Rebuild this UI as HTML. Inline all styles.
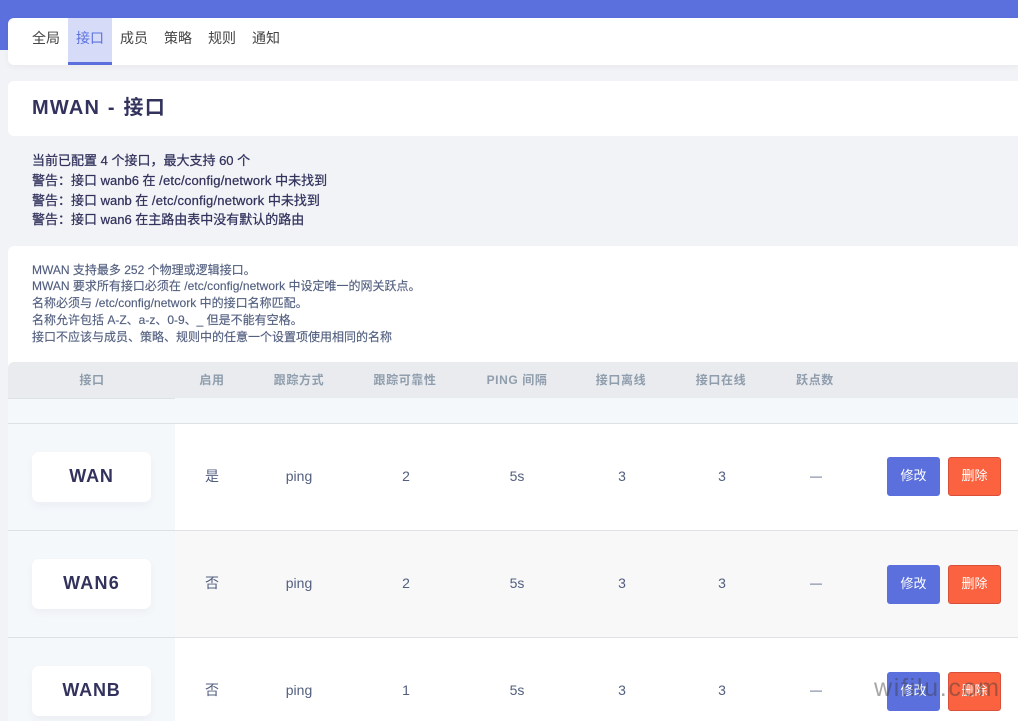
<!DOCTYPE html>
<html lang="zh"><head><meta charset="utf-8"><title>MWAN</title>
<style>
*{box-sizing:border-box}
html,body{margin:0;padding:0;width:1018px;height:721px;overflow:hidden}
body{position:relative;background:#f2f3f6;font-family:"Liberation Sans","Noto Sans CJK SC",sans-serif;color:#32325d}
.a{position:absolute;white-space:nowrap}
.c{position:absolute;white-space:nowrap;text-align:center;transform:translateX(-50%)}
.nav{font-size:14px;color:#444;top:29px;line-height:19px}
.l{left:32px;font-size:13px;line-height:20px;font-weight:400;color:#32325d;-webkit-text-stroke:.25px #32325d}
.l span{letter-spacing:.21px}
.d{left:32px;font-size:12px;line-height:17px;color:#525f7f;-webkit-text-stroke:.15px #525f7f}
.d span{letter-spacing:.05px}
.th{top:372px;font-size:12px;line-height:16px;font-weight:700;color:#8f9dac;letter-spacing:.6px}
.td{font-size:14px;line-height:20px;color:#525f7f}
.card{position:absolute;left:32px;width:119px;height:50px;background:#fff;border-radius:7px;box-shadow:0 4px 8px rgba(50,50,93,.05);text-align:center;font-size:18px;font-weight:700;line-height:48px;color:#32325d;letter-spacing:.8px}
.btn{position:absolute;width:53px;height:39px;border-radius:3px;color:#fff;font-size:13px;line-height:36px;text-align:center}
.b1{left:887px;background:#5b70dd;border:1px solid #5b70dd}
.b2{left:948px;background:#fb6340;border:1px solid #d9503a}
</style></head><body>
<div class="a" style="left:0;top:0;width:1018px;height:50px;background:#5b70dd"></div>
<div class="a" style="left:8px;top:18px;width:1010px;height:47px;background:#fff;border-radius:6px 0 0 6px;box-shadow:0 2px 6px rgba(50,50,93,.05)"></div>
<div class="a" style="left:68px;top:18px;width:44px;height:47px;background:#d6dcf8;border-bottom:3px solid #5b70dd"></div>
<div class="a nav" style="left:32px">全局</div>
<div class="a nav" style="left:76px;color:#5b70dd">接口</div>
<div class="a nav" style="left:120px">成员</div>
<div class="a nav" style="left:164px">策略</div>
<div class="a nav" style="left:208px">规则</div>
<div class="a nav" style="left:252px">通知</div>

<div class="a" style="left:8px;top:81px;width:1010px;height:55px;background:#fff;border-radius:6px 0 0 6px"></div>
<div class="a" style="left:32px;top:95px;font-size:20px;line-height:26px;font-weight:700;letter-spacing:1.2px;word-spacing:1px;color:#32325d">MWAN - 接口</div>

<div class="a l" style="top:151px">当前已配置 4 个接口，最大支持 60 个</div>
<div class="a l" style="top:171px">警告：接口 wanb6 在 <span>/etc/config/network</span> 中未找到</div>
<div class="a l" style="top:191px">警告：接口 wanb 在 <span>/etc/config/network</span> 中未找到</div>
<div class="a l" style="top:210px">警告：接口 wan6 在主路由表中没有默认的路由</div>

<div class="a" style="left:8px;top:246px;width:1010px;height:475px;background:#fff;border-radius:6px 0 0 0"></div>
<div class="a d" style="top:262px">MWAN 支持最多 252 个物理或逻辑接口。</div>
<div class="a d" style="top:278px">MWAN 要求所有接口必须在 <span>/etc/config/network</span> 中设定唯一的网关跃点。</div>
<div class="a d" style="top:295px">名称必须与 <span>/etc/config/network</span> 中的接口名称匹配。</div>
<div class="a d" style="top:312px">名称允许包括 A-Z、a-z、0-9、_ 但是不能有空格。</div>
<div class="a d" style="top:329px">接口不应该与成员、策略、规则中的任意一个设置项使用相同的名称</div>

<div class="a" style="left:8px;top:362px;width:1010px;height:36px;background:#e9ebef;border-radius:6px 0 0 0"></div>
<div class="a" style="left:8px;top:398px;width:167px;height:1px;background:#dee2e6"></div>
<div class="a" style="left:8px;top:398px;width:1010px;height:25px;background:#f5f8fb;clip-path:inset(0 0 0 167px)"></div>
<div class="a" style="left:8px;top:399px;width:167px;height:322px;background:#f5f8fb"></div>
<div class="a" style="left:175px;top:531px;width:843px;height:106px;background:#f8f8f9"></div>
<div class="a" style="left:8px;top:423px;width:1010px;height:1px;background:#dee2e6"></div>
<div class="a" style="left:8px;top:530px;width:1010px;height:1px;background:#dee2e6"></div>
<div class="a" style="left:8px;top:637px;width:1010px;height:1px;background:#dee2e6"></div>

<div class="c th" style="left:92px">接口</div>
<div class="c th" style="left:212px">启用</div>
<div class="c th" style="left:299px">跟踪方式</div>
<div class="c th" style="left:405px">跟踪可靠性</div>
<div class="c th" style="left:517px">PING 间隔</div>
<div class="c th" style="left:621px">接口离线</div>
<div class="c th" style="left:721px">接口在线</div>
<div class="c th" style="left:815px">跃点数</div>

<div class="card" style="top:452px">WAN</div>
<div class="c td" style="left:212px;top:466px">是</div>
<div class="c td" style="left:299px;top:466px">ping</div>
<div class="c td" style="left:406px;top:466px">2</div>
<div class="c td" style="left:517px;top:466px">5s</div>
<div class="c td" style="left:622px;top:466px">3</div>
<div class="c td" style="left:722px;top:466px">3</div>
<div class="c td" style="left:816px;top:466px;font-size:12px">—</div>
<div class="btn b1" style="top:457px">修改</div>
<div class="btn b2" style="top:457px">删除</div>

<div class="card" style="top:559px;letter-spacing:1.2px">WAN6</div>
<div class="c td" style="left:212px;top:573px">否</div>
<div class="c td" style="left:299px;top:573px">ping</div>
<div class="c td" style="left:406px;top:573px">2</div>
<div class="c td" style="left:517px;top:573px">5s</div>
<div class="c td" style="left:622px;top:573px">3</div>
<div class="c td" style="left:722px;top:573px">3</div>
<div class="c td" style="left:816px;top:573px;font-size:12px">—</div>
<div class="btn b1" style="top:565px">修改</div>
<div class="btn b2" style="top:565px">删除</div>

<div class="card" style="top:666px">WANB</div>
<div class="c td" style="left:212px;top:680px">否</div>
<div class="c td" style="left:299px;top:680px">ping</div>
<div class="c td" style="left:406px;top:680px">1</div>
<div class="c td" style="left:517px;top:680px">5s</div>
<div class="c td" style="left:622px;top:680px">3</div>
<div class="c td" style="left:722px;top:680px">3</div>
<div class="c td" style="left:816px;top:680px;font-size:12px">—</div>
<div class="btn b1" style="top:672px">修改</div>
<div class="btn b2" style="top:672px">删除</div>

<div class="a" style="left:874px;top:673px;font-size:25px;line-height:30px;color:rgba(60,60,60,.45);letter-spacing:1.7px">wifilu.com</div>
</body></html>
